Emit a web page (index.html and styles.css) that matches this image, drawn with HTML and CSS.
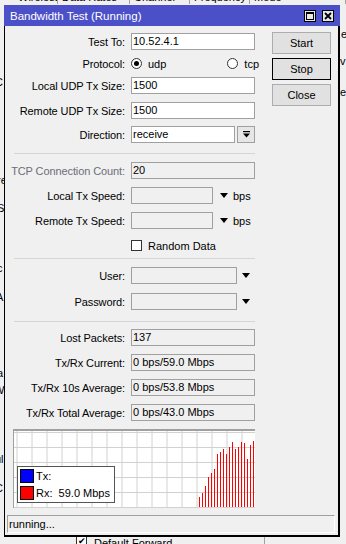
FILE: index.html
```html
<!DOCTYPE html>
<html>
<head>
<meta charset="utf-8">
<link rel="stylesheet" href="styles.css">
</head>
<body>
<div class="desk">
  <div class="hdr">
    <span class="hcell h1">Wireless</span><span class="hcell h2">Data Rates</span><span class="hcell h3">Channel</span><span class="hcell h4">Frequency</span><span class="hcell h5">Mode</span>
  </div>
  <span class="frag fr1">el</span>
  <span class="frag fr2">v</span>
  <span class="frag fr3">e</span>
  <span class="frag fl1">C</span>
  <span class="frag fl2">re</span>
  <span class="frag fl3">S</span>
  <span class="frag fl4">c</span>
  <span class="frag fl5">A</span>
  <span class="frag fl6">a</span>
  <span class="frag fl7">W</span>
  <span class="frag fl8">ul</span>
  <span class="frag fl9">C</span>
  <div class="bottomrow">
    <span class="bcheck">&#10004;</span><span class="btext">Default Forward</span>
  </div>
  <div class="vline"></div>
</div>

<div class="window">
  <div class="titlebar">
    <span class="title">Bandwidth Test (Running)</span>
    <span class="tbtn">
      <svg width="10" height="10" viewBox="0 0 10 10"><rect x="1.5" y="1.5" width="7" height="7" fill="none" stroke="#000" stroke-width="1"/><rect x="1" y="1" width="8" height="2" fill="#000"/></svg>
    </span>
    <span class="tbtn">
      <svg width="10" height="10" viewBox="0 0 10 10"><path d="M2 2 L8 8 M8 2 L2 8" stroke="#000" stroke-width="1.8"/></svg>
    </span>
  </div>
  <div class="client">
    <div class="top">
      <div class="form">
        <div class="row">
          <span class="lbl">Test To:</span>
          <span class="inp">10.52.4.1</span>
        </div>
        <div class="row mt5">
          <span class="lbl">Protocol:</span>
          <span class="radio on"></span><span class="rtext">udp</span>
          <span class="radio tcp"></span><span class="rtext">tcp</span>
        </div>
        <div class="row mt5">
          <span class="lbl">Local UDP Tx Size:</span>
          <span class="inp">1500</span>
        </div>
        <div class="row mt8">
          <span class="lbl">Remote UDP Tx Size:</span>
          <span class="inp">1500</span>
        </div>
        <div class="row mt7">
          <span class="lbl">Direction:</span>
          <span class="inp combo">receive</span>
          <span class="dbtn">
            <svg width="9" height="9" viewBox="0 0 9 9"><rect x="1" y="1" width="7" height="1.2" fill="#000"/><path d="M1 3.5 H8 L4.5 7.5 Z" fill="#000"/></svg>
          </span>
        </div>
        <div class="sep s1"></div>
        <div class="row">
          <span class="lbl dis">TCP Connection Count:</span>
          <span class="inp ro">20</span>
        </div>
        <div class="row mt8">
          <span class="lbl">Local Tx Speed:</span>
          <span class="inp ro short"></span>
          <span class="tri t1"></span><span class="unit">bps</span>
        </div>
        <div class="row mt8">
          <span class="lbl">Remote Tx Speed:</span>
          <span class="inp ro short"></span>
          <span class="tri t1"></span><span class="unit">bps</span>
        </div>
        <div class="row mt8">
          <span class="lbl"></span>
          <span class="check"></span><span class="ctext">Random Data</span>
        </div>
        <div class="sep s2"></div>
        <div class="row">
          <span class="lbl">User:</span>
          <span class="inp ro mid"></span>
          <span class="tri t2"></span>
        </div>
        <div class="row mt9">
          <span class="lbl">Password:</span>
          <span class="inp ro mid"></span>
          <span class="tri t2"></span>
        </div>
        <div class="sep s3"></div>
        <div class="row">
          <span class="lbl">Lost Packets:</span>
          <span class="inp ro">137</span>
        </div>
        <div class="row mt8">
          <span class="lbl">Tx/Rx Current:</span>
          <span class="inp ro">0 bps/59.0 Mbps</span>
        </div>
        <div class="row mt8">
          <span class="lbl">Tx/Rx 10s Average:</span>
          <span class="inp ro">0 bps/53.8 Mbps</span>
        </div>
        <div class="row mt8">
          <span class="lbl">Tx/Rx Total Average:</span>
          <span class="inp ro">0 bps/43.0 Mbps</span>
        </div>
        <div class="graph">
          <svg class="chart" width="241" height="77" viewBox="0 0 241 77">
            <g stroke="#d2d2d2" stroke-width="1">
              <path d="M3 0 V77 M18 0 V77 M33 0 V77 M48 0 V77 M63 0 V77 M78 0 V77 M93 0 V77 M108 0 V77 M123 0 V77 M138 0 V77 M153 0 V77 M168 0 V77 M183 0 V77 M198 0 V77 M213 0 V77 M228 0 V77"/>
              <path d="M0 1.5 H241 M0 16.5 H241 M0 31.5 H241 M0 46.5 H241 M0 61.5 H241 M0 76.5 H241"/>
            </g>
            <g fill="#ff0000">
              <rect x="185" y="66" width="1" height="10"/>
              <rect x="188" y="62" width="1" height="14"/>
              <rect x="191" y="55" width="1" height="21"/>
              <rect x="194" y="46" width="1" height="30"/>
              <rect x="197" y="42" width="1" height="34"/>
              <rect x="200" y="38" width="1" height="38"/>
              <rect x="203" y="23" width="1" height="53"/>
              <rect x="206" y="21" width="1" height="55"/>
              <rect x="209" y="18" width="1" height="58"/>
              <rect x="212" y="23" width="1" height="53"/>
              <rect x="215" y="16" width="1" height="60"/>
              <rect x="218" y="11" width="1" height="65"/>
              <rect x="221" y="18" width="1" height="58"/>
              <rect x="224" y="16" width="1" height="60"/>
              <rect x="227" y="11" width="1" height="65"/>
              <rect x="230" y="12" width="1" height="64"/>
              <rect x="233" y="28" width="1" height="48"/>
              <rect x="236" y="14" width="1" height="62"/>
              <rect x="239" y="10" width="1" height="66"/>
            </g>
          </svg>
          <div class="legend">
            <div class="lrow"><span class="sw tx"></span><span class="ltext">Tx:</span></div>
            <div class="lrow"><span class="sw rx"></span><span class="ltext">Rx:&nbsp; 59.0 Mbps</span></div>
          </div>
        </div>
      </div>
      <div class="buttons">
        <span class="btn">Start</span>
        <span class="btn def">Stop</span>
        <span class="btn">Close</span>
      </div>
    </div>
    <div class="status">running...</div>
  </div>
</div>
</body>
</html>
```

FILE: styles.css
```css
* { box-sizing: border-box; }
html, body { margin: 0; padding: 0; }
body {
  width: 346px;
  height: 544px;
  overflow: hidden;
  position: relative;
  background: #f0f0f0;
  font-family: "Liberation Sans", Arial, sans-serif;
  font-size: 11px;
  color: #000;
}

/* background desktop fragments */
.desk { position: absolute; left: 0; top: 0; width: 346px; height: 544px; background: #f0f0f0; }
.hdr { position: absolute; left: 0; top: -10px; height: 14px; display: flex; white-space: nowrap; font-size: 11px; }
.hcell { display: block; height: 14px; border-right: 1px solid #a0a0a0; padding-left: 4px; line-height: 14px; overflow: hidden; }
.h1 { width: 58px; padding-left: 18px; }
.h2 { width: 72px; }
.h3 { width: 60px; }
.h4 { width: 60px; }
.h5 { width: 96px; }
.frag { position: absolute; font-size: 11px; line-height: 12px; white-space: nowrap; }
.fr1 { left: 341px; top: 28px; }
.fr2 { left: 340px; top: 55px; }
.fr3 { left: 340px; top: 86px; }
.fl1 { left: -5px; top: 76px; }
.fl2 { left: -3px; top: 174px; }
.fl3 { left: -3px; top: 202px; }
.fl4 { left: -3px; top: 262px; }
.fl5 { left: -4px; top: 291px; }
.fl6 { left: -3px; top: 367px; }
.fl7 { left: -6px; top: 384px; }
.fl8 { left: -5px; top: 453px; }
.fl9 { left: -5px; top: 482px; }
.bottomrow { position: absolute; left: 76px; top: 533px; height: 14px; display: flex; align-items: center; }
.bcheck { width: 11px; height: 11px; border: 1px solid #333; background: #fff; font-size: 9px; line-height: 10px; text-align: center; }
.btext { margin-left: 7px; font-size: 11px; padding-top: 6px; }
.vline { position: absolute; left: 264px; top: 530px; width: 1px; height: 14px; background: #a0a0a0; }

/* window */
.window { position: absolute; left: 4px; top: 5px; width: 336px; }
.titlebar {
  height: 21px;
  background: #4c50c8;
  color: #fff;
  display: flex;
  align-items: center;
  padding: 0 6px 0 6px;
}
.title { flex: 1; font-size: 11.5px; }
.tbtn {
  width: 12px;
  height: 12px;
  border: 1px solid #000;
  background: #e8e8e8;
  display: flex;
  align-items: center;
  justify-content: center;
}
.tbtn + .tbtn { margin-left: 6px; }

.client {
  height: 511px;
  border-style: solid;
  border-color: #000;
  border-width: 0 2px 2px 1px;
  background: #f0f0f0;
}
.top { display: flex; }
.form { width: 250px; padding-top: 7px; flex: none; }

.row { display: flex; align-items: center; height: 17px; }
.mt5 { margin-top: 5px; }
.mt7 { margin-top: 7px; }
.mt8 { margin-top: 8px; }
.mt9 { margin-top: 9px; }
.lbl { width: 120px; flex: none; text-align: right; margin-right: 6px; white-space: nowrap; letter-spacing: -0.1px; }
.lbl.dis { color: #6d6d7a; }

.inp {
  display: block;
  width: 124px;
  height: 17px;
  flex: none;
  border: 1px solid #a0a0a0;
  background: #fff;
  padding-left: 1px;
  line-height: 15px;
  white-space: nowrap;
  overflow: hidden;
}
.inp.ro { background: #f0f0f0; }
.inp.combo { width: 104px; }
.inp.short { width: 82px; }
.inp.mid { width: 106px; }

.dbtn {
  width: 18px;
  height: 17px;
  margin-left: 2px;
  border: 1px solid #a0a0a0;
  background: #e6e6e6;
  display: flex;
  align-items: center;
  justify-content: center;
}

.radio {
  width: 11px;
  height: 11px;
  flex: none;
  border-radius: 50%;
  border: 1px solid #333;
  background: #fff;
  position: relative;
}
.radio.on::after {
  content: "";
  position: absolute;
  left: 2px;
  top: 2px;
  width: 5px;
  height: 5px;
  border-radius: 50%;
  background: #000;
}
.radio.tcp { margin-left: 61px; }
.rtext { margin-left: 6px; }

.tri {
  width: 0;
  height: 0;
  border-left: 4px solid transparent;
  border-right: 4px solid transparent;
  border-top: 5px solid #000;
  flex: none;
}
.t1 { margin-left: 7px; }
.t2 { margin-left: 5px; }
.unit { margin-left: 5px; }

.check { width: 11px; height: 11px; border: 1px solid #333; background: #fff; flex: none; }
.ctext { margin-left: 6px; }

.sep { margin-left: 9px; width: 241px; height: 1px; background: #d5d5d5; }
.s1 { margin-top: 10px; margin-bottom: 8px; }
.s2 { margin-top: 4px; margin-bottom: 8px; }
.s3 { margin-top: 11px; margin-bottom: 7px; }

.graph {
  position: relative;
  margin-top: 8px;
  margin-left: 8px;
  width: 242px;
  height: 79px;
  border-top: 2px solid #a0a0a0;
  border-left: 1px solid #a0a0a0;
  background: #fff;
}
.chart { display: block; }
.legend {
  position: absolute;
  left: 3px;
  top: 35px;
  width: 98px;
  height: 37px;
  border: 1px solid #555;
  background: #fff;
  padding: 2px 0 0 2px;
  display: flex;
  flex-direction: column;
  gap: 3px;
}
.lrow { display: flex; align-items: center; height: 14px; }
.sw { width: 14px; height: 14px; border: 1px solid #000; flex: none; }
.sw.tx { background: #0000ff; }
.sw.rx { background: #ff0000; }
.ltext { margin-left: 2px; font-size: 11px; white-space: pre; }

.buttons {
  margin-left: 17px;
  padding-top: 6px;
  display: flex;
  flex-direction: column;
  gap: 4px;
}
.btn {
  display: block;
  width: 59px;
  height: 22px;
  border: 1px solid #adadad;
  background: #e1e1e1;
  text-align: center;
  line-height: 20px;
}
.btn.def { border-color: #000; }

.status {
  margin: 7px 3px 0 2px;
  height: 18px;
  border-top: 1px solid #a0a0a0;
  border-left: 1px solid #a0a0a0;
  border-right: 1px solid #fff;
  border-bottom: 1px solid #fff;
  line-height: 16px;
  padding-left: 1px;
}
```
